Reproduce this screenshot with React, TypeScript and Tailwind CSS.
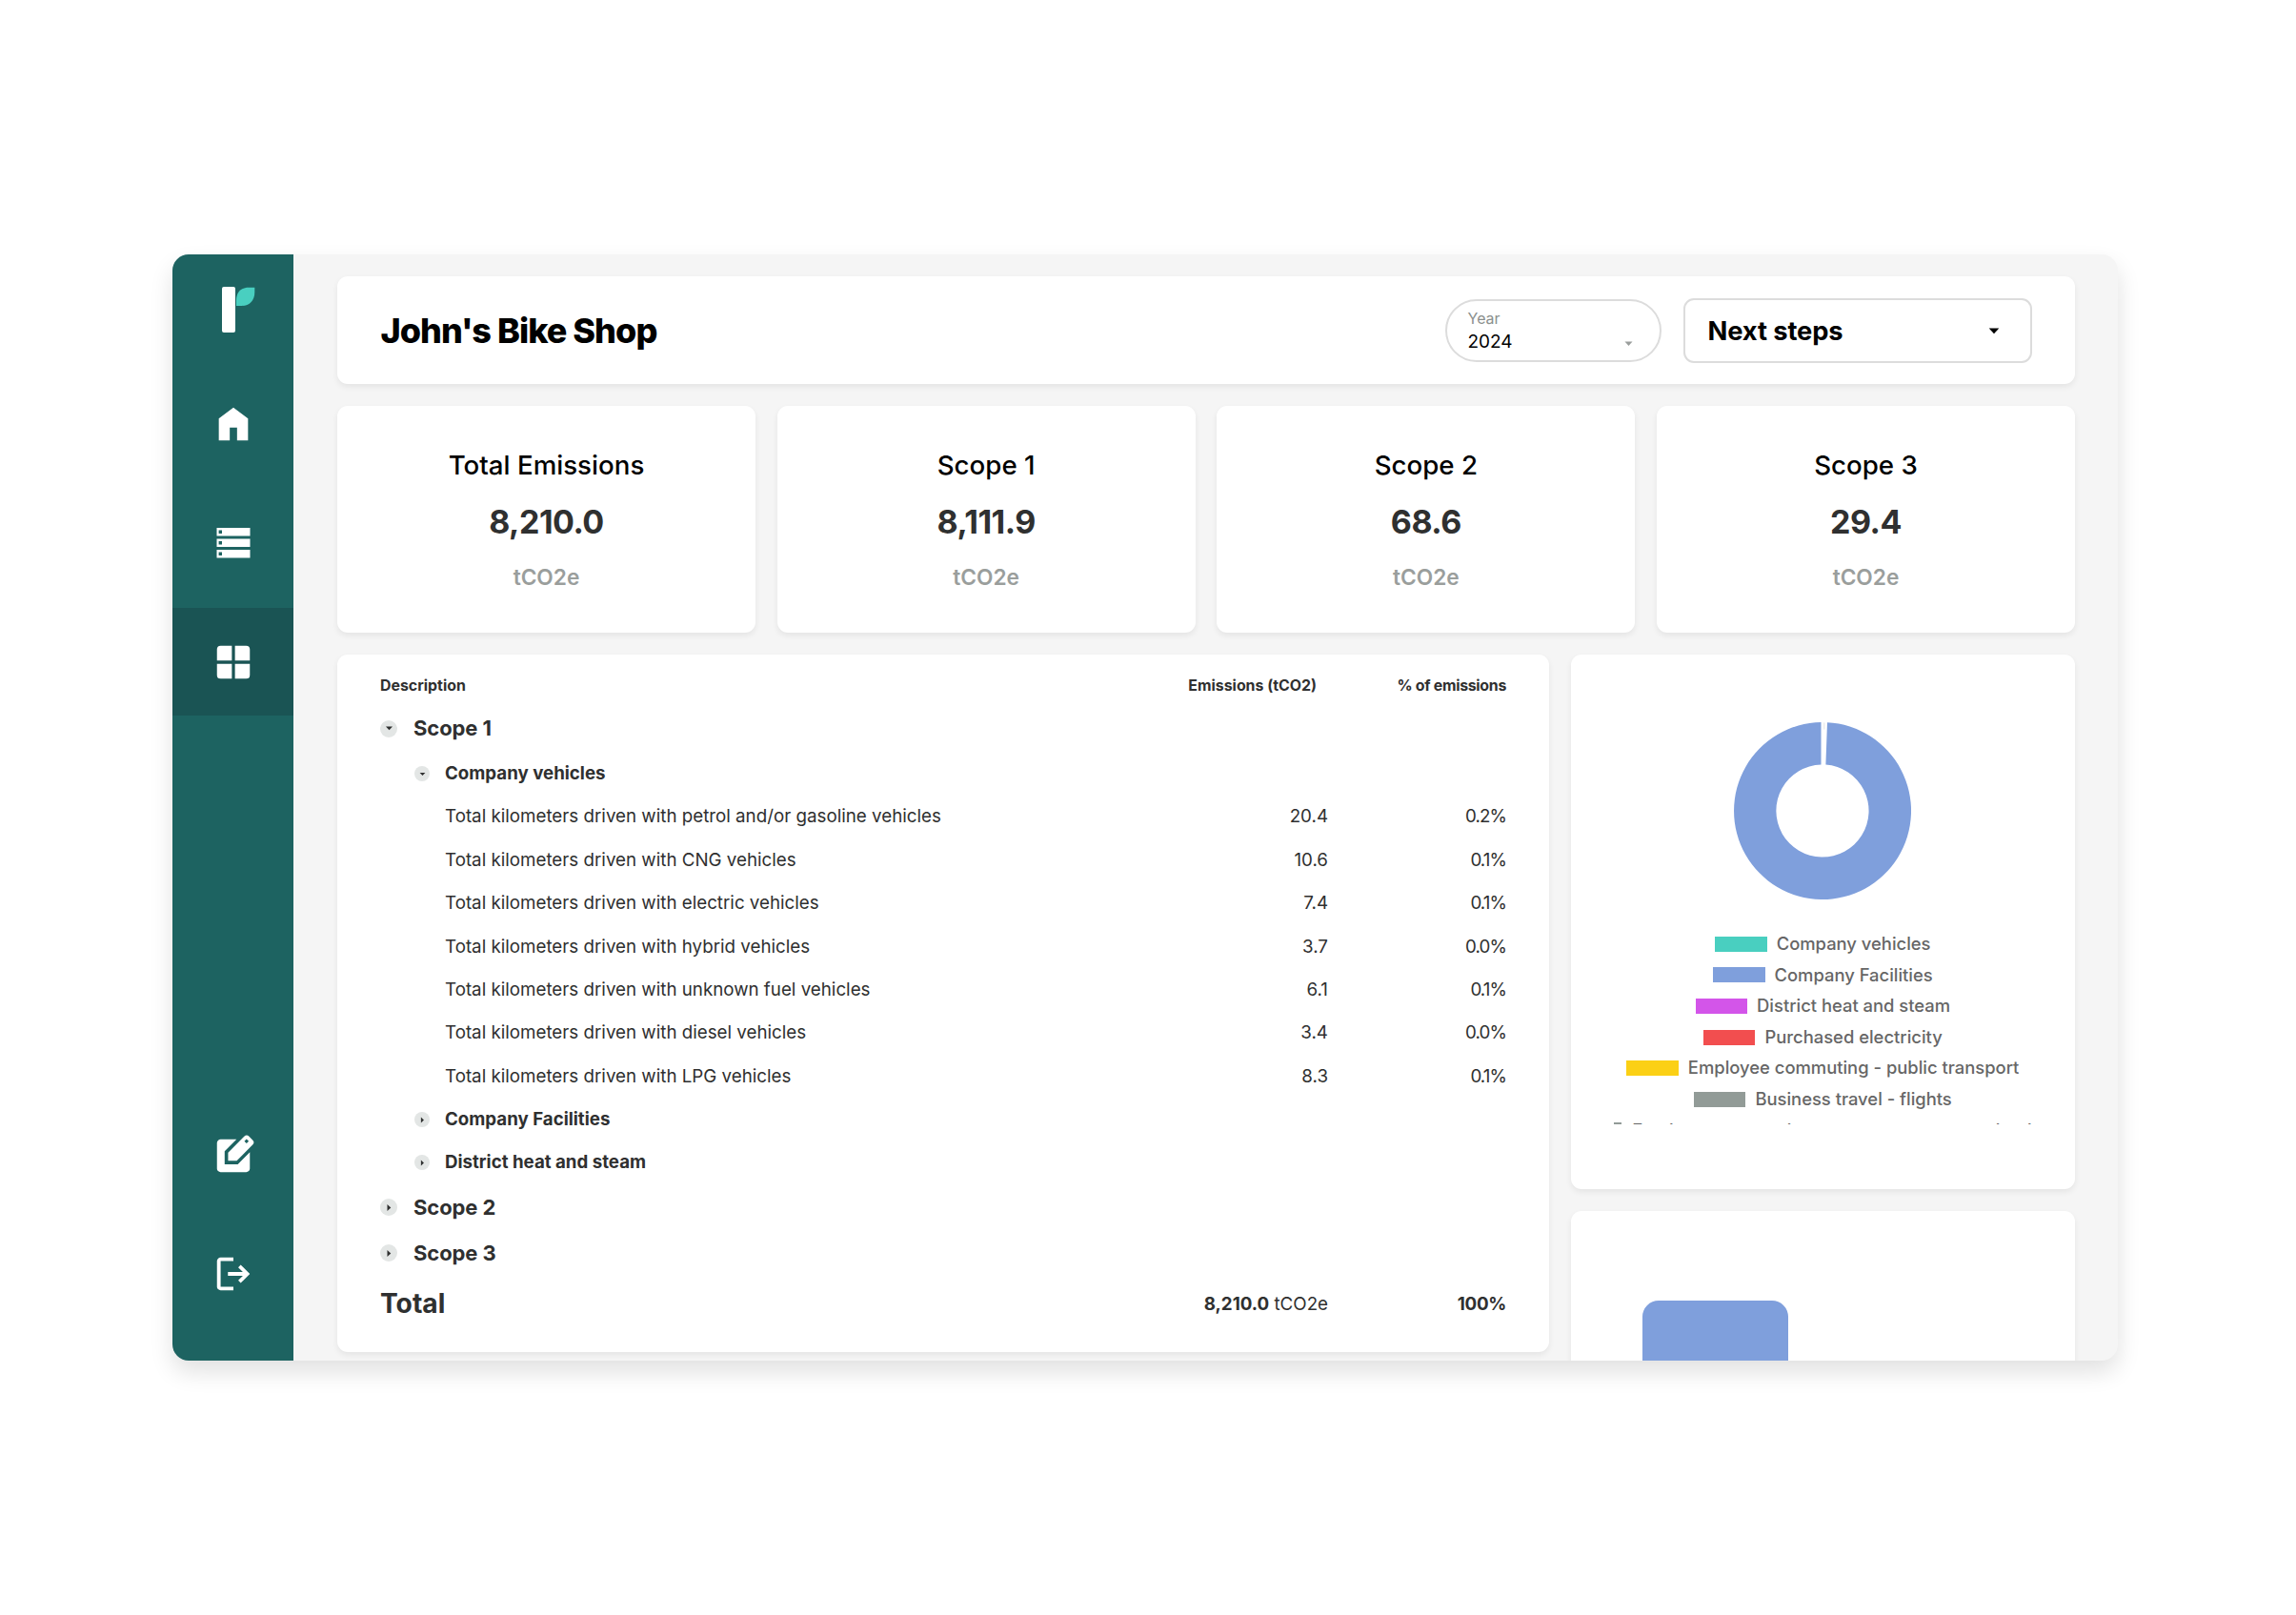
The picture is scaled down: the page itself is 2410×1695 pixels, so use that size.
import React from 'react';

interface StatCardProps {
  title: string;
  value: string;
}

interface ToggleProps {
  open?: boolean;
  small?: boolean;
}

interface RowProps {
  label: string;
  emissions: string;
  percent: string;
}

const rows: RowProps[] = [
  { label: 'Total kilometers driven with petrol and/or gasoline vehicles', emissions: '20.4', percent: '0.2%' },
  { label: 'Total kilometers driven with CNG vehicles', emissions: '10.6', percent: '0.1%' },
  { label: 'Total kilometers driven with electric vehicles', emissions: '7.4', percent: '0.1%' },
  { label: 'Total kilometers driven with hybrid vehicles', emissions: '3.7', percent: '0.0%' },
  { label: 'Total kilometers driven with unknown fuel vehicles', emissions: '6.1', percent: '0.1%' },
  { label: 'Total kilometers driven with diesel vehicles', emissions: '3.4', percent: '0.0%' },
  { label: 'Total kilometers driven with LPG vehicles', emissions: '8.3', percent: '0.1%' },
];

const legend = [
  { label: 'Company vehicles', color: 'bg-[#49cfc0]' },
  { label: 'Company Facilities', color: 'bg-[#7f9fdc]' },
  { label: 'District heat and steam', color: 'bg-[#d355e9]' },
  { label: 'Purchased electricity', color: 'bg-[#f24e4f]' },
  { label: 'Employee commuting - public transport', color: 'bg-[#fbd015]' },
  { label: 'Business travel - flights', color: 'bg-[#929b97]' },
];

const StatCard: React.FC<StatCardProps> = ({ title, value }) => (
  <div className="flex-1 h-[238px] bg-white rounded-[11px] shadow-[0_3px_6px_rgba(0,0,0,0.07)] text-center pt-[43px]">
    <h2 className="text-[27.7px] leading-[38px] font-medium text-black">{title}</h2>
    <p className="mt-[19px] text-[34px] leading-[44px] font-bold tracking-[-0.5px] text-[#2f3030]">{value}</p>
    <p className="mt-[21px] text-[22.7px] leading-[30px] font-semibold text-[#9a9e9c]">tCO2e</p>
  </div>
);

const Toggle: React.FC<ToggleProps> = ({ open, small }) => (
  <span className={`flex items-center justify-center rounded-full bg-[#e3e6e5] ${small ? 'w-4 h-4' : 'w-[18px] h-[18px]'}`}>
    <svg viewBox="0 0 10 10" className={`${small ? 'w-[9px] h-[9px]' : 'w-[11px] h-[11px]'} ${open ? '' : '-rotate-90'}`}>
      <path d="M1.8 3.2h6.4L5 6.6z" fill="#2f3030" />
    </svg>
  </span>
);

const ScopeRow: React.FC<{ label: string; open?: boolean }> = ({ label, open }) => (
  <div className="flex items-center gap-[17px] h-[48px]">
    <Toggle open={open} />
    <span className="text-[22px] font-bold tracking-[-0.1px]">{label}</span>
  </div>
);

const CategoryRow: React.FC<{ label: string; open?: boolean }> = ({ label, open }) => (
  <div className="flex items-center gap-[16px] h-[45.37px] pl-[36px]">
    <Toggle open={open} small />
    <span className="text-[18.7px] font-bold">{label}</span>
  </div>
);

const DataRow: React.FC<RowProps> = ({ label, emissions, percent }) => (
  <div className="flex items-center h-[45.37px] pl-[68px] text-[18.75px]">
    <span className="flex-1">{label}</span>
    <span className="w-[140px] text-right">{emissions}</span>
    <span className="w-[187px] text-right tracking-[-0.9px]">{percent}</span>
  </div>
);

const Sidebar: React.FC = () => (
  <aside className="w-[127px] shrink-0 bg-[#1d6361] flex flex-col items-center text-white">
    <div className="h-[121px] w-full pt-[33px] pl-[52px]">
      <svg width="36" height="50" viewBox="0 0 36 50">
        <rect x="0" y="1" width="14" height="48" rx="2" fill="#fff" />
        <path d="M15 21v-6C15 7 20 1.700 28 1.700h6.300v5C34.300 15 29 21 21 21z" fill="#49cfc0" />
      </svg>
    </div>
    <div className="w-full h-[113.4px] flex items-center justify-center">
      <svg width="46" height="46" viewBox="0 0 24 24" fill="currentColor">
        <path d="M4 21V9l8-6 8 6v12h-6v-7h-4v7z" />
      </svg>
    </div>
    <div className="mt-[11.600px] w-full h-[113.4px] flex items-center justify-center">
      <svg width="36" height="32" viewBox="0 0 36 32" fill="currentColor" fillRule="evenodd">
        <path d="M.5 0h35v8.600H.5zM2.600 2.600v3.400h3.400V2.600zM.5 11.500h35v8.600H.5zM2.600 14.100v3.400h3.400v-3.400zM.5 22.900h35v8.600H.5zM2.600 25.500v3.400h3.400v-3.400z" />
      </svg>
    </div>
    <div className="mt-[11.600px] w-full h-[113.4px] bg-[#1a5454] flex items-center justify-center">
      <svg width="46" height="46" viewBox="0 0 24 24" fill="currentColor">
        <path d="M11.150 3v8.150H3V5a2 2 0 0 1 2-2zM12.850 3H19a2 2 0 0 1 2 2v6.150h-8.150zM3 12.850h8.150V21H5a2 2 0 0 1-2-2zM12.850 12.850H21V19a2 2 0 0 1-2 2h-6.150z" />
      </svg>
    </div>
    <div className="mt-auto w-full h-[113.4px] flex items-center justify-center">
      <svg width="46" height="46" viewBox="0 0 24 24" fill="currentColor">
        <path d="M5 21q-.825 0-1.412-.587T3 19V5q0-.825.588-1.412T5 3h8.700L7.200 9.500v7.200h7.200L21 10.100V19q0 .825-.587 1.413T19 21z" />
        <path fillRule="evenodd" d="M9.100 14.700v-4.450l8.800-8.800a1.900 1.900 0 0 1 2.700 0l1.900 1.900a1.900 1.900 0 0 1 0 2.700l-8.650 8.650zM19.200 2.850l-1.200 1.200 1.200 1.200 1.200-1.200z" />
      </svg>
    </div>
    <div className="mt-[11px] mb-[34px] w-full h-[113.4px] flex items-center justify-center">
      <svg width="46" height="46" viewBox="0 0 24 24" fill="currentColor">
        <path d="M5 21q-.825 0-1.412-.587T3 19V5q0-.825.588-1.412T5 3h7v2H5v14h7v2zm11-4-1.375-1.450 2.550-2.550H9v-2h8.175l-2.550-2.550L16 7l5 5z" />
      </svg>
    </div>
  </aside>
);

const Header: React.FC = () => (
  <header className="h-[113.4px] px-[45.5px] bg-white rounded-[11px] shadow-[0_3px_6px_rgba(0,0,0,0.07)] flex items-center">
    <h1 className="flex-1 text-[36px] font-extrabold tracking-[-0.95px] text-black">John's Bike Shop</h1>
    <button className="w-[227px] h-[66px] pl-[22px] pr-[28px] border-2 border-[#dcdcdc] rounded-full flex items-end justify-between text-left">
      <span className="pb-[6px]">
        <span className="block text-[16px] leading-[20px] text-[#8b8f8d]">Year</span>
        <span className="block mt-[2px] text-[19px] leading-[26px] text-black">2024</span>
      </span>
      <svg width="9" height="6" viewBox="0 0 9 6" className="mb-[14px]">
        <path d="M.5.5h8l-4 4.500z" fill="#9a9e9c" />
      </svg>
    </button>
    <button className="ml-[23px] w-[366px] h-[68px] pl-[24px] pr-[32px] border-2 border-[#dcdcdc] rounded-[11px] flex items-center justify-between">
      <span className="pt-[3px] text-[27.3px] leading-[36px] font-bold tracking-[-0.1px] text-black">Next steps</span>
      <svg width="12" height="7" viewBox="0 0 12 7" className="mt-[2px]">
        <path d="M.7.5h10.600L6 6.300z" fill="#000" />
      </svg>
    </button>
  </header>
);

const EmissionsTable: React.FC = () => (
  <section className="w-[1272px] h-[732px] bg-white rounded-[11px] shadow-[0_3px_6px_rgba(0,0,0,0.07)] px-[45px] pt-[21px] text-[#2f3030]">
    <div className="flex items-center h-[24px] text-[15.9px] font-bold">
      <span className="flex-1">Description</span>
      <span>Emissions (tCO2)</span>
      <span className="w-[199px] text-right tracking-[-0.3px]">% of emissions</span>
    </div>
    <div className="pt-[9px]">
      <ScopeRow label="Scope 1" open />
      <div className="pt-[0.5px]">
        <CategoryRow label="Company vehicles" open />
        {rows.map((row) => (
          <DataRow key={row.label} {...row} />
        ))}
        <CategoryRow label="Company Facilities" />
        <CategoryRow label="District heat and steam" />
      </div>
      <ScopeRow label="Scope 2" />
      <ScopeRow label="Scope 3" />
    </div>
    <div className="flex items-center h-[58px] text-[18.75px]">
      <span className="flex-1 text-[28.2px] font-bold">Total</span>
      <span className="pt-0.5"><b className="font-bold">8,210.0</b> tCO2e</span>
      <span className="pt-0.5 w-[187px] text-right font-bold tracking-[-0.3px]">100%</span>
    </div>
  </section>
);

const EmissionsChart: React.FC = () => (
  <section className="h-[561px] bg-white rounded-[11px] shadow-[0_3px_6px_rgba(0,0,0,0.07)]">
    <div className="h-[493px] pt-[70px] overflow-hidden flex flex-col items-center">
      <svg width="188" height="188" viewBox="-94 -94 188 188" className="shrink-0">
        <path d="M5 -92.870A93 93 0 1 1 -1.500 -92.990L-1.500 -48.580A48.600 48.600 0 1 0 3.400 -48.480z" fill="#7f9fdc" />
        <path d="M1.800 -92.500v7" stroke="#dcdcdc" strokeWidth=".8" />
      </svg>
      <ul className="mt-[29.5px] text-[18.4px] font-medium text-[#666]">
        {legend.map((item) => (
          <li key={item.label} className="flex items-center justify-center gap-[10px] h-[32.6px] whitespace-nowrap">
            <span className={`w-[54.5px] h-4 ${item.color}`} />
            {item.label}
          </li>
        ))}
        <li className="flex items-center justify-center gap-[11px] h-[32.6px] whitespace-nowrap">
          <span className="w-[8px] h-4 bg-[#929b97]" />
          Employee commuting - average passenger load
        </li>
      </ul>
    </div>
  </section>
);

const App: React.FC = () => {
  return (
    <div className="w-[2410px] h-[1695px] bg-white pt-[267px] pl-[181px] font-['Inter',sans-serif]">
      <div className="w-[2042px] h-[1161px] flex rounded-[17px] overflow-hidden bg-[#f5f5f5] shadow-[0_12px_24px_rgba(0,0,0,0.12)]">
        <Sidebar />
        <main className="flex-1 pl-[46px] pr-[45px] pt-[23px]">
          <Header />
          <div className="mt-[22.600px] flex gap-[22.700px]">
            <StatCard title="Total Emissions" value="8,210.0" />
            <StatCard title="Scope 1" value="8,111.9" />
            <StatCard title="Scope 2" value="68.6" />
            <StatCard title="Scope 3" value="29.4" />
          </div>
          <div className="mt-[23px] flex gap-[22.700px]">
            <EmissionsTable />
            <div className="flex-1 flex flex-col gap-[23px]">
              <EmissionsChart />
              <section className="h-[500px] bg-white rounded-[11px] shadow-[0_3px_6px_rgba(0,0,0,0.07)] pt-[94px] pl-[75px]">
                <div className="w-[153px] h-[406px] bg-[#7f9fdc] rounded-t-[17px]" />
              </section>
            </div>
          </div>
        </main>
      </div>
    </div>
  );
};

export default App;
